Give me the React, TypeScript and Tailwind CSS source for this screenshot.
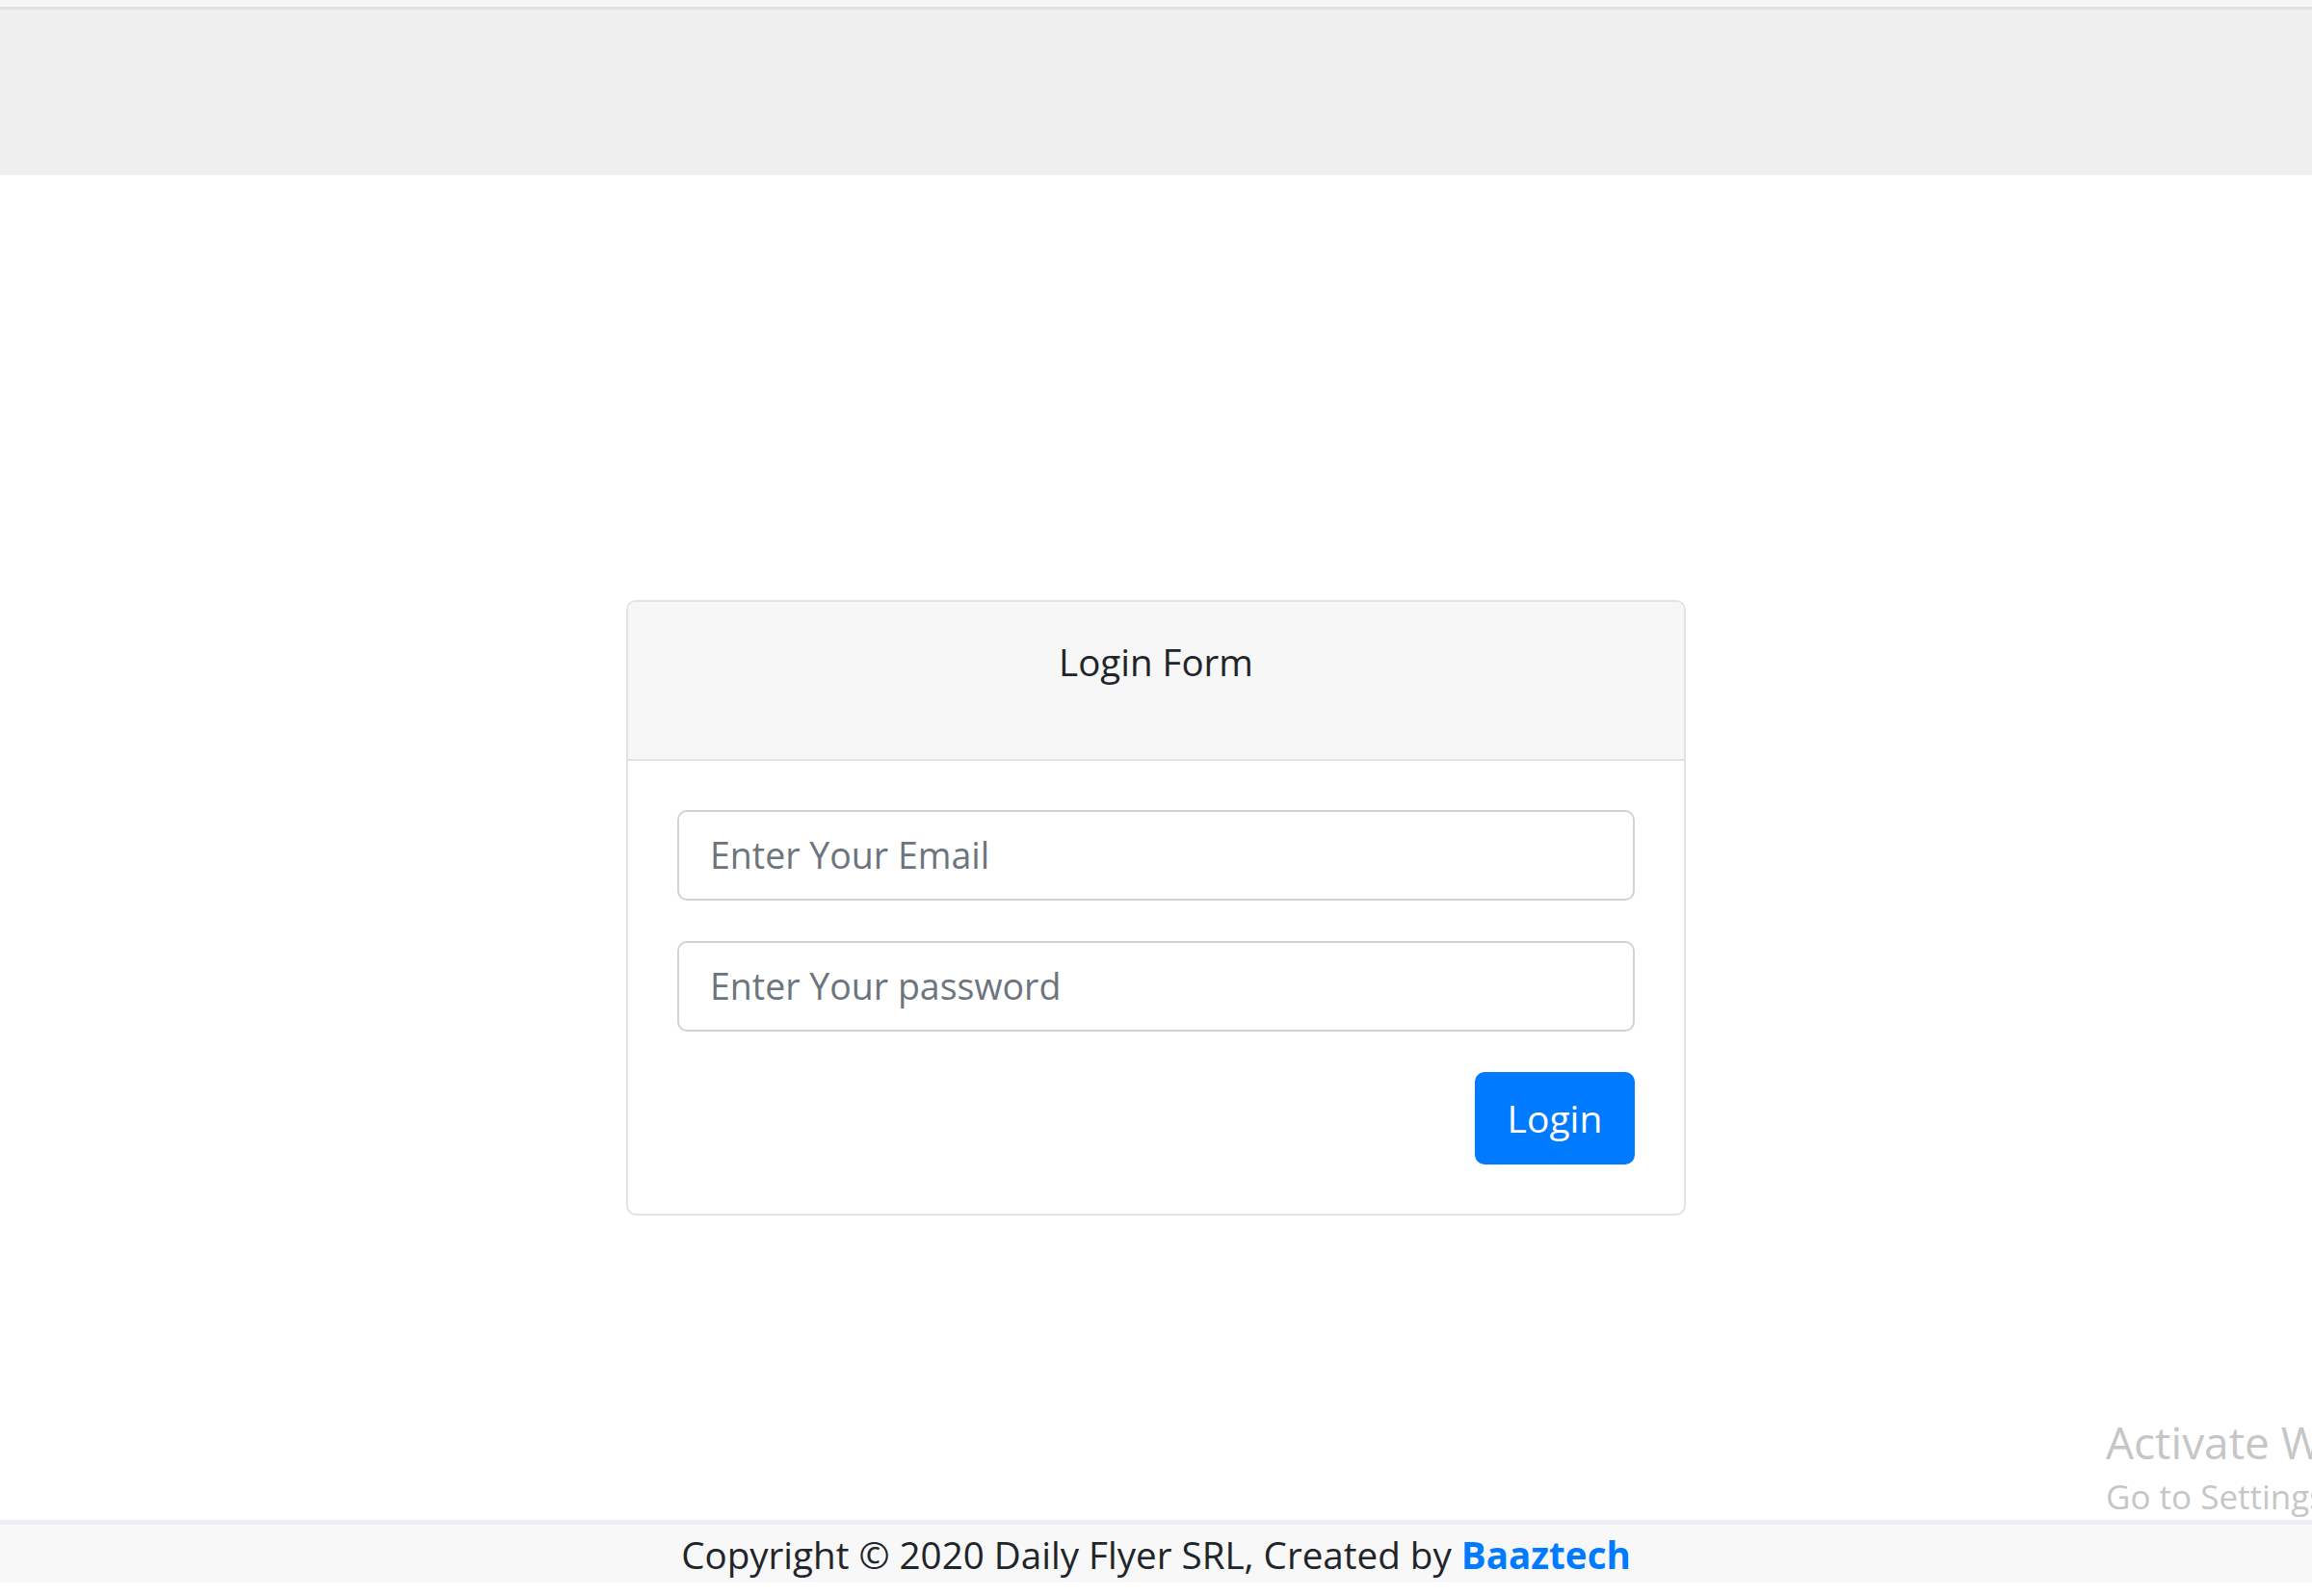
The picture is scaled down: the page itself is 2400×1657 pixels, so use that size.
import React from "react";

export default function App() {
  const font = { fontFamily: '"Open Sans", "Noto Sans", "Liberation Sans", sans-serif' };
  return (
    <div
      className="relative w-full h-[1657px] bg-white flex flex-col overflow-hidden text-[#212529]"
      style={font}
    >
      {/* top browser strip */}
      <div className="h-[7px] bg-[#f7f7f7] shrink-0" />
      <div className="h-[3px] bg-[#e1e1e1] shrink-0" />
      {/* navbar */}
      <div className="h-[172px] bg-[#efefef] border-b border-[#f3f3f3] shrink-0" />

      {/* main */}
      <div className="flex-1 flex justify-center pt-[441px]">
        <div className="w-[1100px] h-[639px] border-[2px] border-[#e2e2e2] rounded-[10px] bg-white flex flex-col overflow-hidden">
          <div className="h-[165px] shrink-0 bg-[#f7f7f7] border-b-[2px] border-[#e2e2e2] flex justify-center pt-[32px]">
            <span className="text-[38.5px] leading-[60px]">Login Form</span>
          </div>
          <div className="flex flex-col px-[51px] pt-[51px]">
            <div className="h-[94px] border-[2px] border-[#ced4da] rounded-[10px] flex items-center px-[32px]">
              <span className="text-[37.5px] text-[#6c757d]">Enter Your Email</span>
            </div>
            <div className="h-[94px] mt-[42px] border-[2px] border-[#ced4da] rounded-[10px] flex items-center px-[32px]">
              <span className="text-[37.5px] text-[#6c757d]">Enter Your password</span>
            </div>
            <div className="flex justify-end mt-[42px]">
              <button className="w-[166px] h-[96px] bg-[#007bff] rounded-[10px] text-white text-[39px] flex items-center justify-center">
                Login
              </button>
            </div>
          </div>
        </div>
      </div>

      {/* footer */}
      <div className="h-[5px] bg-[#ececf4] shrink-0" />
      <div className="h-[60px] bg-[#f8f8f8] shrink-0 flex items-center justify-center">
        <span className="text-[38.6px] leading-[60px] whitespace-nowrap pt-[2px]">
          Copyright © 2020 Daily Flyer SRL, Created by{" "}
          <span className="font-bold text-[#007bff]">Baaztech</span>
        </span>
      </div>
      <div className="h-[14px] bg-white shrink-0" />

      {/* windows watermark overlay */}
      <div className="absolute left-[2186px] top-[1468px] whitespace-nowrap text-[#c6c6c6] pointer-events-none">
        <div className="text-[46px] leading-[58px]">Activate Windows</div>
        <div className="text-[35px] leading-[56px]">Go to Settings to activate Windows.</div>
      </div>
    </div>
  );
}
